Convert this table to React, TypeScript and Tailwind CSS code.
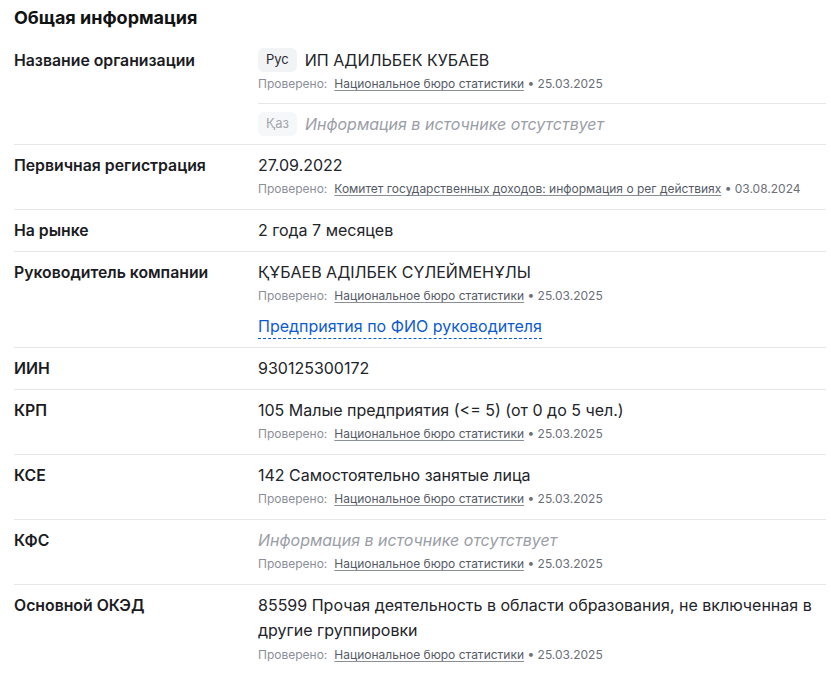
import type { ReactNode } from 'react'

interface Source {
  name: string
  date: string
}

const NBS: Source = { name: 'Национальное бюро статистики', date: '25.03.2025' }
const KGD: Source = {
  name: 'Комитет государственных доходов: информация о рег действиях',
  date: '03.08.2024',
}

function Verified({ source }: { source: Source }) {
  return (
    <p className="mt-0.5 mb-0.5 text-[12px] leading-5 text-[#8b9098]">
      Проверено:
      <a className="ml-[7px] text-[#555b66] underline underline-offset-2 decoration-[#8b9098]">
        {source.name}
      </a>
      <span className="text-[#6b7079]"> • {source.date}</span>
    </p>
  )
}

function Missing() {
  return (
    <p className="text-[16px] leading-6 italic text-[#9a9ea6]">
      Информация в источнике отсутствует
    </p>
  )
}

function Row({ label, children }: { label: string; children: ReactNode }) {
  return (
    <div className="flex border-t border-[#e6e7ea] py-2 first:border-t-0">
      <div className="w-[244px] shrink-0 pt-px text-[15.8px] leading-6 font-semibold text-[#1b1c1f]">
        {label}
      </div>
      <div className="min-w-0 flex-1">{children}</div>
    </div>
  )
}

function Value({ children }: { children: ReactNode }) {
  return <p className="text-[16px] leading-6 text-[#222429]">{children}</p>
}

export default function App() {
  return (
    <div
      className="bg-white pt-1 pl-[14px] pr-[5px] pb-4"
      style={{ fontFamily: 'Inter, "Noto Sans", sans-serif' }}
    >
      <h2 className="text-[18px] leading-7 font-bold text-[#111214] mb-2">
        Общая информация
      </h2>

      <div>
        <Row label="Название организации">
          <div className="pb-[7px] border-b border-[#e6e7ea]">
            <div className="flex items-center gap-2">
              <span className="h-6 px-2 flex items-center rounded-md bg-[#f2f3f5] text-[13px] text-[#2a2c31]">
                Рус
              </span>
              <Value>ИП АДИЛЬБЕК КУБАЕВ</Value>
            </div>
            <Verified source={NBS} />
          </div>
          <div className="pt-2 flex items-center gap-2">
            <span className="h-6 px-2 flex items-center rounded-md bg-[#f6f7f8] text-[13px] text-[#a3a7ae]">
              Қаз
            </span>
            <Missing />
          </div>
        </Row>

        <Row label="Первичная регистрация">
          <Value>27.09.2022</Value>
          <Verified source={KGD} />
        </Row>

        <Row label="На рынке">
          <Value>2 года 7 месяцев</Value>
        </Row>

        <Row label="Руководитель компании">
          <Value>ҚҰБАЕВ АДІЛБЕК СҮЛЕЙМЕНҰЛЫ</Value>
          <Verified source={NBS} />
          <a className="mt-2 block w-fit text-[16px] leading-6 text-[#0d5bd1] border-b border-dashed border-[#0d5bd1]">
            Предприятия по ФИО руководителя
          </a>
        </Row>

        <Row label="ИИН">
          <Value>930125300172</Value>
        </Row>

        <Row label="КРП">
          <Value>105 Малые предприятия (&lt;= 5) (от 0 до 5 чел.)</Value>
          <Verified source={NBS} />
        </Row>

        <Row label="КСЕ">
          <Value>142 Самостоятельно занятые лица</Value>
          <Verified source={NBS} />
        </Row>

        <Row label="КФС">
          <Missing />
          <Verified source={NBS} />
        </Row>

        <Row label="Основной ОКЭД">
          <p className="text-[16px] leading-[25px] text-[#222429]">
            85599 Прочая деятельность в области образования, не включенная в
            другие группировки
          </p>
          <Verified source={NBS} />
        </Row>
      </div>
    </div>
  )
}
